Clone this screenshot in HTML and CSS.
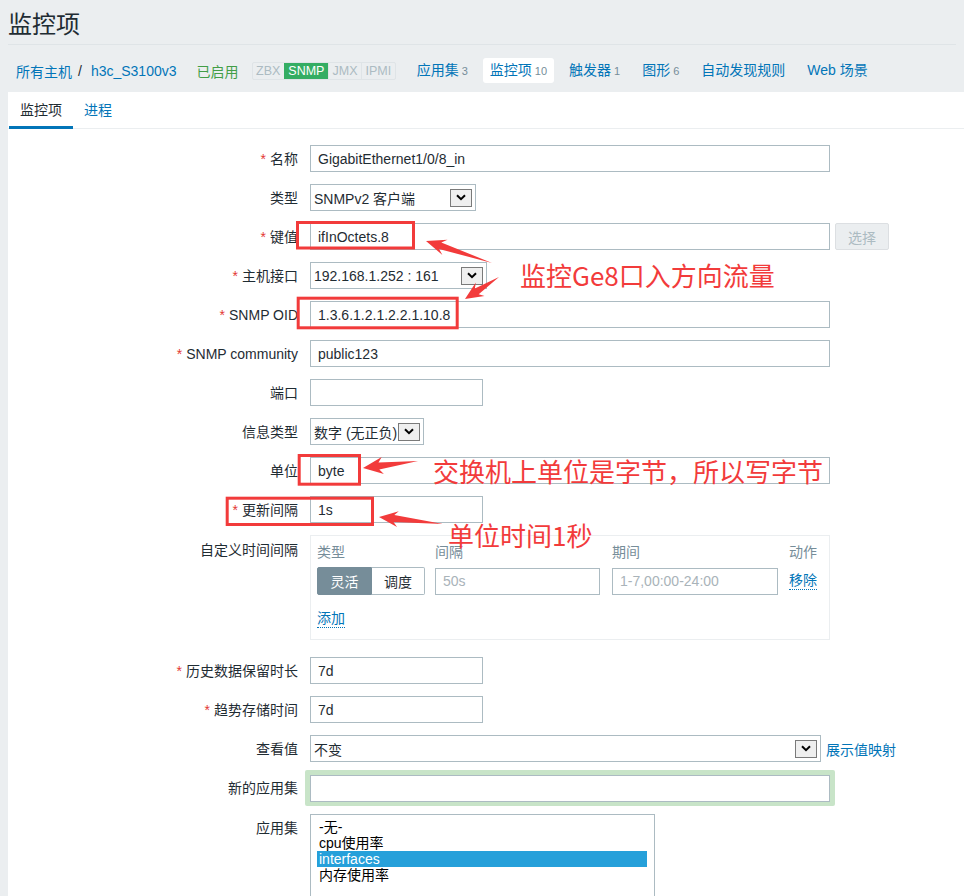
FILE: index.html
```html
<!DOCTYPE html>
<html lang="zh-CN">
<head>
<meta charset="utf-8">
<title>监控项</title>
<link rel="stylesheet" href="styles.css">
</head>
<body>
<header class="page-title"><h1>监控项</h1></header>
<nav class="host-nav">
  <a class="crumb">所有主机</a><span class="sep">/</span><a class="crumb">h3c_S3100v3</a>
  <span class="status">已启用</span>
  <span class="avail"><span>ZBX</span><span class="on">SNMP</span><span>JMX</span><span>IPMI</span></span>
  <ul class="nav-items">
    <li><a>应用集</a><span class="count">3</span></li>
    <li class="active"><a>监控项</a><span class="count">10</span></li>
    <li><a>触发器</a><span class="count">1</span></li>
    <li><a>图形</a><span class="count">6</span></li>
    <li><a>自动发现规则</a></li>
    <li><a>Web 场景</a></li>
  </ul>
</nav>
<main class="panel">
  <div class="tabs"><span class="tab active">监控项</span><a class="tab">进程</a></div>
  <div class="form">
    <div class="row"><label class="lbl"><span class="req">*</span>名称</label><div class="field"><input class="txt w-lg" value="GigabitEthernet1/0/8_in"></div></div>
    <div class="row"><label class="lbl">类型</label><div class="field"><div class="sel w-type"><span>SNMPv2 客户端</span><span class="dd"><svg width="10" height="7" viewBox="0 0 10 7"><path d="M1 1.2 L5 5.2 L9 1.2" fill="none" stroke="#000" stroke-width="2"/></svg></span></div></div></div>
    <div class="row"><label class="lbl"><span class="req">*</span>键值</label><div class="field"><input class="txt w-lg" value="ifInOctets.8"><span class="btn-dis">选择</span></div></div>
    <div class="row"><label class="lbl"><span class="req">*</span>主机接口</label><div class="field"><div class="sel w-host"><span>192.168.1.252 : 161</span><span class="dd"><svg width="10" height="7" viewBox="0 0 10 7"><path d="M1 1.2 L5 5.2 L9 1.2" fill="none" stroke="#000" stroke-width="2"/></svg></span></div></div></div>
    <div class="row"><label class="lbl"><span class="req">*</span>SNMP OID</label><div class="field"><input class="txt w-lg" value="1.3.6.1.2.1.2.2.1.10.8"></div></div>
    <div class="row"><label class="lbl"><span class="req">*</span>SNMP community</label><div class="field"><input class="txt w-lg" value="public123"></div></div>
    <div class="row"><label class="lbl">端口</label><div class="field"><input class="txt w-sm" value=""></div></div>
    <div class="row"><label class="lbl">信息类型</label><div class="field"><div class="sel w-info"><span>数字 (无正负)</span><span class="dd"><svg width="10" height="7" viewBox="0 0 10 7"><path d="M1 1.2 L5 5.2 L9 1.2" fill="none" stroke="#000" stroke-width="2"/></svg></span></div></div></div>
    <div class="row"><label class="lbl">单位</label><div class="field"><input class="txt w-lg" value="byte"></div></div>
    <div class="row"><label class="lbl"><span class="req">*</span>更新间隔</label><div class="field"><input class="txt w-sm" value="1s"></div></div>
    <div class="row row-top custom">
      <label class="lbl">自定义时间间隔</label>
      <div class="field">
        <div class="intervals">
          <div class="ih">类型</div><div class="ih">间隔</div><div class="ih">期间</div><div class="ih">动作</div>
          <div class="seg"><span class="seg-on">灵活</span><span class="seg-off">调度</span></div>
          <input class="txt w-int" placeholder="50s">
          <input class="txt w-per" placeholder="1-7,00:00-24:00">
          <a class="dotted">移除</a>
          <a class="dotted add">添加</a>
        </div>
      </div>
    </div>
    <div class="row"><label class="lbl"><span class="req">*</span>历史数据保留时长</label><div class="field"><input class="txt w-sm" value="7d"></div></div>
    <div class="row"><label class="lbl"><span class="req">*</span>趋势存储时间</label><div class="field"><input class="txt w-sm" value="7d"></div></div>
    <div class="row"><label class="lbl">查看值</label><div class="field"><div class="sel w-view"><span>不变</span><span class="dd"><svg width="10" height="7" viewBox="0 0 10 7"><path d="M1 1.2 L5 5.2 L9 1.2" fill="none" stroke="#000" stroke-width="2"/></svg></span></div><a class="map-link">展示值映射</a></div></div>
    <div class="row newapp"><label class="lbl">新的应用集</label><div class="field"><div class="frame"><input class="txt w-lg" value=""></div></div></div>
    <div class="row row-top apps">
      <label class="lbl">应用集</label>
      <div class="field">
        <div class="listbox">
          <div class="opt">-无-</div>
          <div class="opt">cpu使用率</div>
          <div class="opt opt-sel">interfaces</div>
          <div class="opt">内存使用率</div>
        </div>
      </div>
    </div>
  </div>
</main>

<svg class="marks" width="964" height="896" viewBox="0 0 964 896">
  <g fill="none" stroke="#f23b3b" stroke-width="3">
    <rect x="297.5" y="222.5" width="116" height="25.5"/>
    <rect x="298.2" y="298.2" width="159" height="29.6"/>
    <rect x="299.2" y="455.5" width="60.3" height="28.7"/>
    <rect x="227.2" y="498.2" width="145.3" height="26.3"/>
  </g>
  <g fill="#f23b3b">
    <polygon points="426,241 447.5,239.7 441.3,242.4 492,263 439.1,249 442.4,254.9"/>
    <polygon points="465,299 484.5,295.9 478.7,294.3 499,277 474.9,288.5 475.8,282.5"/>
    <polygon points="363,468 381.7,457.1 378.5,462.5 418,461 379.3,469.5 383.9,473.9"/>
    <polygon points="379,517 398.8,511.2 394.3,515.1 443,524 393.5,522.1 397,527"/>
  </g>
</svg>
<div class="note n1">监控Ge8口入方向流量</div>
<div class="note n2">交换机上单位是字节，所以写字节</div>
<div class="note n3">单位时间1秒</div>
</body>
</html>
```

FILE: styles.css
```css
* { box-sizing: border-box; }
html, body { margin: 0; }
body {
  width: 964px;
  height: 896px;
  overflow: hidden;
  position: relative;
  background: #ebeef0;
  font-family: "Liberation Sans", Arial, "Noto Sans CJK SC", sans-serif;
  font-size: 14px;
  color: #1f2c33;
}
a { color: #0275b8; text-decoration: none; }

.page-title {
  margin: 0 8px;
  height: 45px;
  padding: 11px 0 5px;
  border-bottom: 1px solid #dfe4e7;
}
.page-title h1 {
  margin: 0;
  font-size: 24px;
  line-height: 28px;
  font-weight: normal;
  color: #1f2c33;
}

.host-nav {
  height: 47px;
  padding: 4px 0 0 16px;
  display: flex;
  align-items: center;
  white-space: nowrap;
}
.sep { margin: 0 9px 0 6px; color: #1f2c33; }
.status { margin-left: 20px; color: #429e47; }
.avail {
  margin-left: 13px;
  display: flex;
  border: 1px solid #dfe4e7;
  border-radius: 2px;
  font-size: 12.5px;
  line-height: 16px;
}
.avail span { padding: 0 3.5px; color: #acbbc2; border-left: 1px solid #dfe4e7; }
.avail span:first-child { border-left: 0; }
.avail .on { background: #34ad63; color: #fff; border-left-color: #34ad63; }
.nav-items {
  display: flex;
  gap: 8px;
  margin: 0 0 0 14px;
  padding: 0;
  list-style: none;
}
.nav-items li { padding: 4px 7px; line-height: 16px; border-radius: 3px; }
.nav-items li.active { background: #fff; }
.count { font-size: 11px; color: #768d99; margin-left: 3px; }

.panel {
  margin-left: 8px;
  background: #fff;
  height: 804px;
}
.tabs {
  display: flex;
  height: 37px;
  border-bottom: 1px solid #ebeef0;
  padding-left: 1px;
}
.tab {
  padding: 0 11px;
  height: 37px;
  line-height: 36px;
  margin-bottom: -1px;
  color: #0275b8;
}
.tab.active { color: #1f2c33; box-shadow: inset 0 -3px 0 #0275b8; }

.form { padding-top: 16px; }
.row { display: flex; align-items: center; margin-bottom: 12px; }
.row-top { align-items: flex-start; }
.lbl { width: 290px; flex: none; text-align: right; line-height: 18px; }
.field { margin-left: 12px; display: flex; align-items: center; }
.req { color: #e33734; margin-right: 4px; }

.txt {
  display: block;
  height: 27px;
  border: 1px solid #acbbc2;
  padding: 0 7px;
  margin: 0;
  font: 14px "Liberation Sans", Arial, "Noto Sans CJK SC", sans-serif;
  color: #1f2c33;
  background: #fff;
  outline: none;
  border-radius: 0;
}
.txt::placeholder { color: #a9b3b9; opacity: 1; }
.w-lg { width: 520px; }
.w-sm { width: 173px; }

.sel {
  display: flex;
  align-items: center;
  justify-content: space-between;
  height: 27px;
  border: 1px solid #acbbc2;
  padding: 0 3px 0 3px;
  background: #fff;
  white-space: nowrap;
}
.w-type { width: 166px; }
.w-host { width: 177px; }
.w-info { width: 114px; }
.w-view { width: 511px; }
.dd {
  width: 22px;
  height: 18px;
  flex: none;
  border: 1px solid #7a7a7a;
  background: #efefef;
  display: flex;
  align-items: center;
  justify-content: center;
}
.dd svg { display: block; }

.btn-dis {
  margin-left: 5px;
  width: 54px;
  height: 27px;
  display: flex;
  align-items: center;
  justify-content: center;
  background: #ebeef0;
  border: 1px solid #dcdfe2;
  border-radius: 2px;
  color: #acbbc2;
}

.custom { margin-top: 1px; margin-bottom: 17px; }
.custom .lbl { padding-top: 6px; }
.intervals {
  width: 520px;
  height: 105px;
  border: 1px solid #ebeef0;
  padding: 7px 0 0 6px;
  display: grid;
  grid-template-columns: 118px 177px 177px auto;
  grid-template-rows: 18px 28px auto;
  row-gap: 6px;
  align-items: center;
}
.ih { color: #768d99; line-height: 18px; }
.seg { display: flex; height: 28px; width: 108px; }
.seg span { display: flex; align-items: center; justify-content: center; }
.seg-on {
  width: 55px;
  background: #768d99;
  border: 1px solid #768d99;
  color: #fff;
  border-radius: 2px 0 0 2px;
}
.seg-off {
  width: 53px;
  border: 1px solid #acbbc2;
  border-left: 0;
  border-radius: 0 2px 2px 0;
  color: #1f2c33;
}
.w-int { width: 165px; }
.w-per { width: 166px; }
.dotted {
  justify-self: start;
  line-height: 17px;
  border-bottom: 1px dotted #0275b8;
}
.add { grid-column: 1 / -1; align-self: start; margin-top: 9px; }

.map-link { margin-left: 5px; }

.newapp { margin-top: -4px; margin-bottom: 8px; }
.frame {
  margin-left: -5px;
  padding: 5px 5px 4px 5px;
  background: #c8e4c8;
  border-radius: 2px;
}

.apps .lbl { padding-top: 5px; }
.listbox {
  width: 345px;
  height: 100px;
  border: 1px solid #acbbc2;
  padding: 4px 7px 0 6px;
  background: #fff;
}
.opt { line-height: 16px; padding-left: 2px; color: #000; white-space: nowrap; }
.opt-sel { background: #26a0da; color: #fff; }

.marks { position: absolute; left: 0; top: 0; pointer-events: none; }
.note {
  position: absolute;
  font-family: "Noto Sans CJK SC", sans-serif;
  font-size: 26px;
  line-height: 26px;
  color: #f23b3b;
  white-space: nowrap;
}
.n1 { left: 520px; top: 262px; }
.n2 { left: 433px; top: 458px; }
.n3 { left: 448px; top: 522px; }
```
